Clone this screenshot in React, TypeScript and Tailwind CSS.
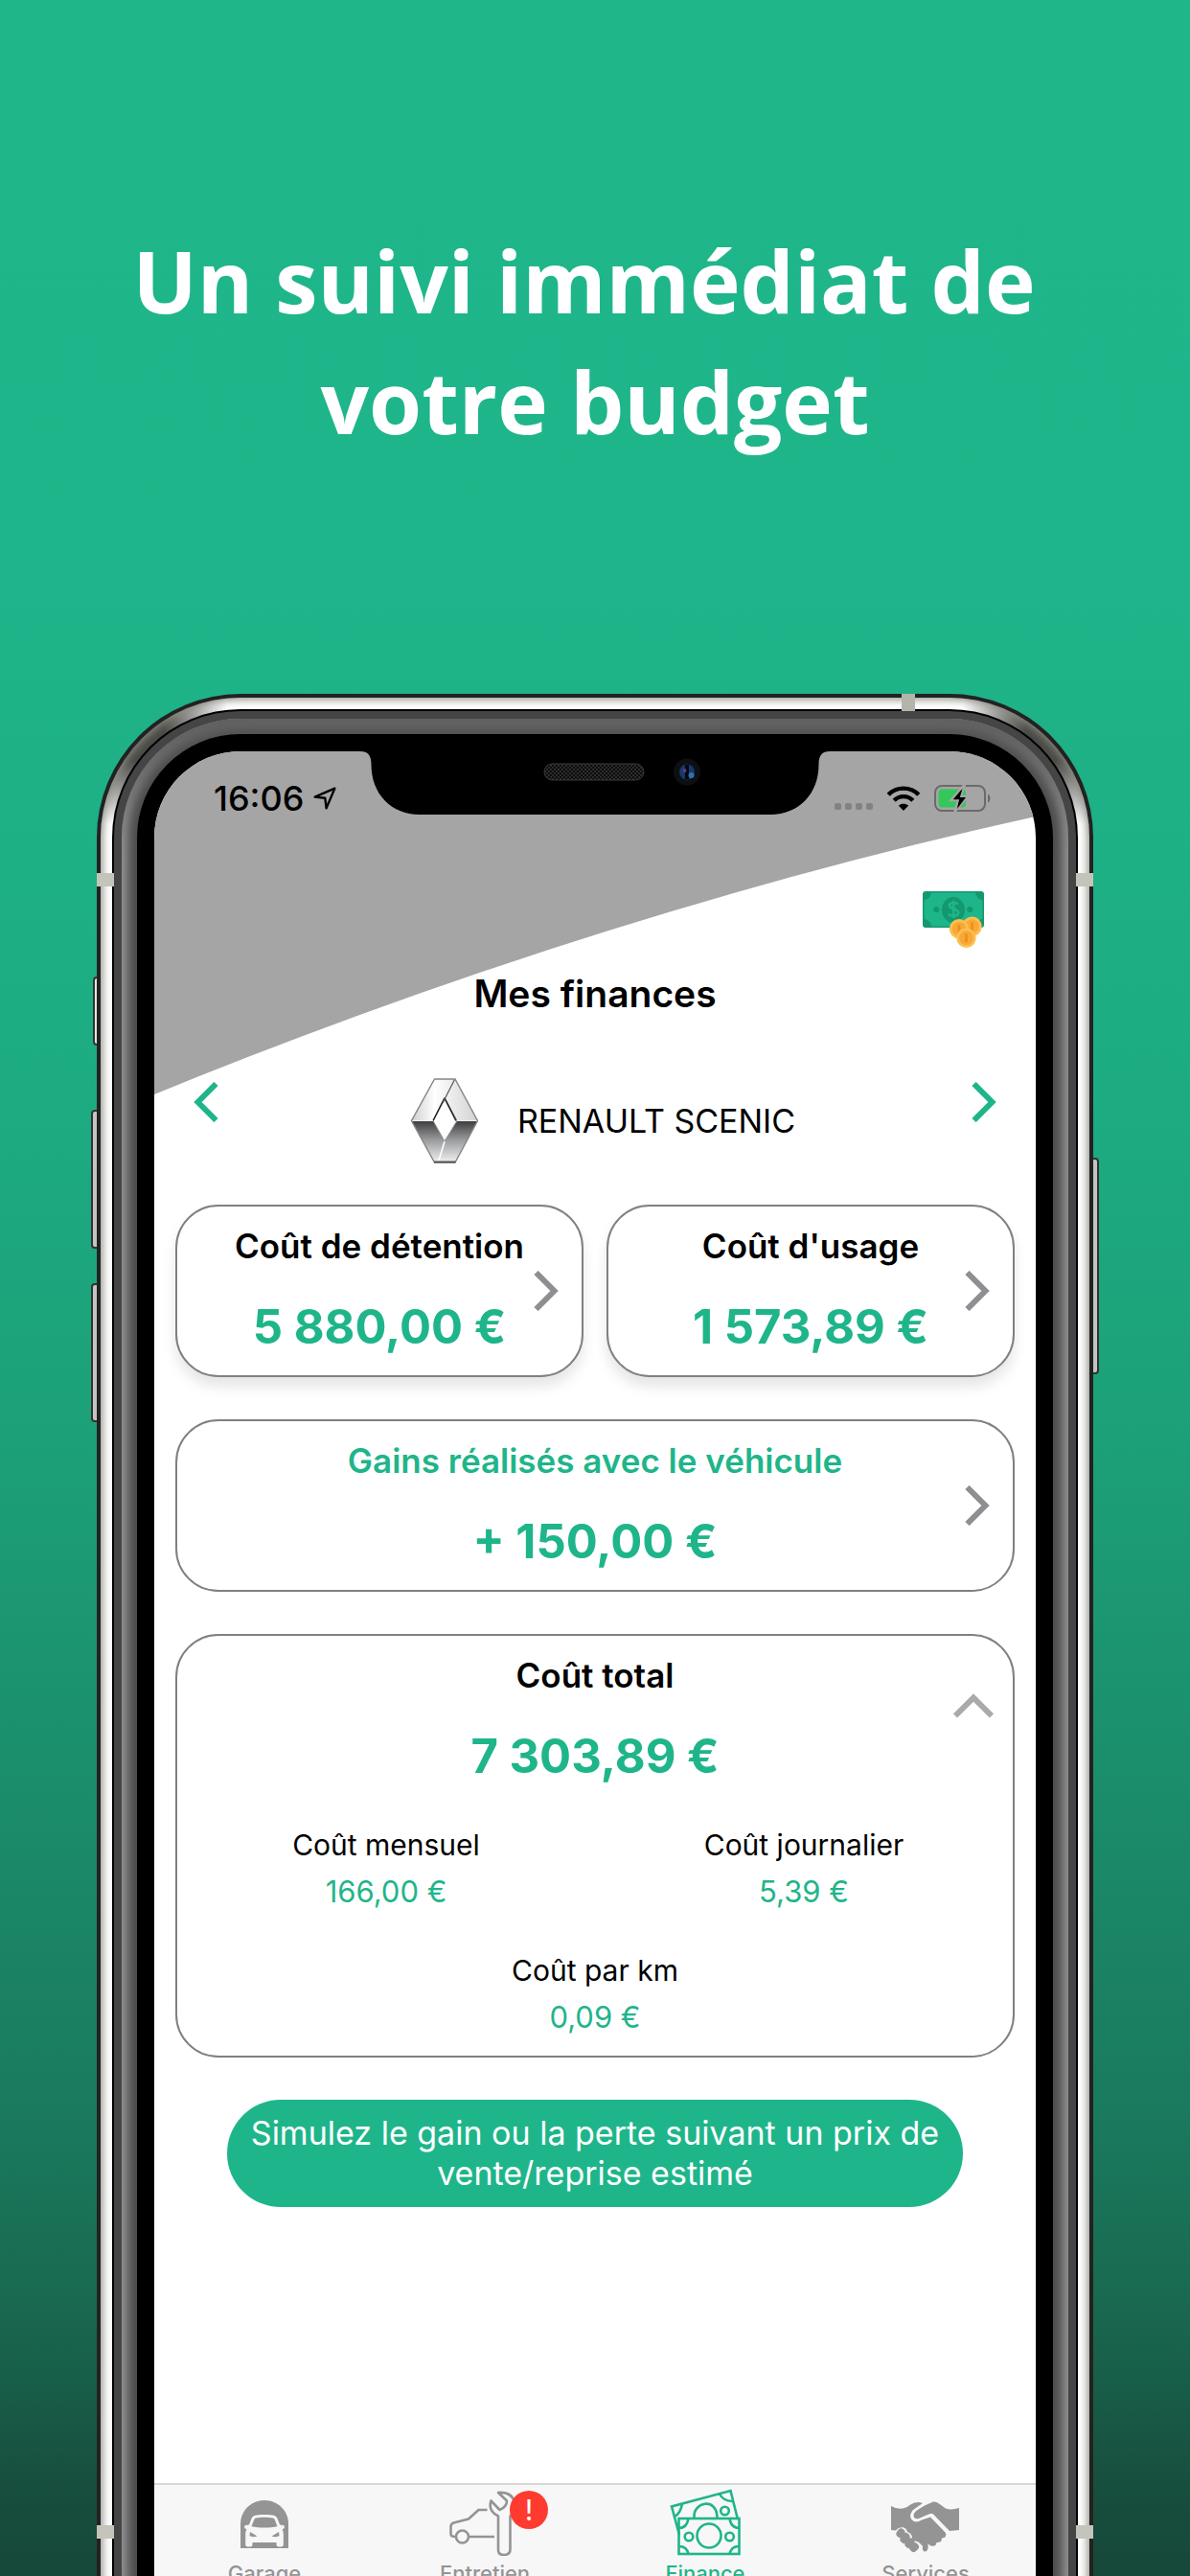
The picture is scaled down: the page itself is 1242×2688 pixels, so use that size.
import type { ReactNode } from "react";

interface CostCardProps {
  title: string;
  amount: string;
  accent?: boolean;
  shadow?: boolean;
}

const details = [
  { label: "Coût mensuel", value: "166,00 €", wide: false },
  { label: "Coût journalier", value: "5,39 €", wide: false },
  { label: "Coût par km", value: "0,09 €", wide: true },
];

function Chevron({ className }: { className: string }) {
  return (
    <svg className={`h-[42px] w-[26px] ${className}`} viewBox="0 0 26 42" fill="none" stroke="currentColor" strokeWidth={6}>
      <path d="M2.5 2 L21.5 21 L2.5 40" />
    </svg>
  );
}

function LocationArrow() {
  return (
    <svg className="h-6 w-6" viewBox="0 0 24 24" fill="none" stroke="currentColor" strokeWidth={2.4} strokeLinejoin="round">
      <path d="M22.4 1.6 L1.6 10.6 L12.3 11.8 L13.6 22.4 Z" />
    </svg>
  );
}

function WifiIcon() {
  return (
    <svg className="h-[26px] w-[36px]" viewBox="0 0 36 26" fill="none" stroke="#000" strokeWidth={4.4}>
      <path d="M2.2 9.2 C11 0.4 25 0.4 33.8 9.2" />
      <path d="M8.2 15.2 C13.6 9.8 22.4 9.8 27.8 15.2" />
      <path d="M18 26 L12.9 20.8 C15.7 18.2 20.3 18.2 23.1 20.8 Z" fill="#000" stroke="none" />
    </svg>
  );
}

function BatteryIcon() {
  return (
    <svg className="h-[30px] w-[60px]" viewBox="0 0 60 30" fill="none">
      <rect x="1" y="2" width="52" height="26" rx="7" stroke="#6b6b6b" strokeWidth="2" />
      <path d="M56 10.5 C59.3 11.5 59.3 18.5 56 19.5 Z" fill="#6b6b6b" />
      <rect x="4.5" y="5.5" width="28.5" height="19" rx="4" fill="#34c759" />
      <path d="M30.5 2 L17.5 17 H25 L21.5 29 L35 13 H27.5 L31.5 2 Z" fill="#000" stroke="#a5a5a5" strokeWidth="2.5" />
      <path d="M29.5 5 L20 16.2 H26.2 L24 26 L33 14 H26.8 Z" fill="#000" />
    </svg>
  );
}

function Coin({ cx, cy }: { cx: number; cy: number }) {
  return (
    <g>
      <circle cx={cx} cy={cy} r="10.2" fill="#fcc050" />
      <circle cx={cx} cy={cy} r="7.4" fill="#f8a836" />
      <rect x={cx - 1.4} y={cy - 4.5} width="2.8" height="9" rx="1" fill="#ef8f1c" />
    </g>
  );
}

function MoneyIcon() {
  return (
    <svg className="h-[60px] w-16" viewBox="0 0 64 60">
      <rect width="64" height="38" rx="3" fill="#14986f" />
      <path d="M9 1.6 H55 A8 8 0 0 0 62.4 9 V29 A8 8 0 0 0 55 36.4 H9 A8 8 0 0 0 1.6 29 V9 A8 8 0 0 0 9 1.6Z" fill="#1fb58a" />
      <ellipse cx="32" cy="19.5" rx="12" ry="13.5" fill="#14986f" />
      <circle cx="14.3" cy="19" r="3.1" fill="#14986f" />
      <circle cx="49.3" cy="19" r="3.1" fill="#14986f" />
      <path d="M37 13.5 C35 11.3 28 11.2 28 15 C28 19.3 37.3 17.5 37.3 22.3 C37.3 26.5 29.5 26.4 27 23.8 M32.2 9.7 V28" fill="none" stroke="#1fb58a" strokeWidth="2.6" />
      <Coin cx={51.5} cy={36.7} />
      <Coin cx={38} cy={39.3} />
      <Coin cx={45.5} cy={48.7} />
    </svg>
  );
}

function RenaultLogo() {
  return (
    <svg className="h-[104px] w-[104px]" viewBox="0 0 104 104">
      <defs>
        <linearGradient id="chromeTop" x1="0" y1="0" x2="1" y2="0">
          <stop offset="0" stopColor="#cfcfcf" />
          <stop offset="0.35" stopColor="#ffffff" />
          <stop offset="0.7" stopColor="#e6e6e6" />
          <stop offset="1" stopColor="#d2d2d2" />
        </linearGradient>
        <linearGradient id="chromeBottom" x1="0" y1="0" x2="0" y2="1">
          <stop offset="0" stopColor="#3c3c3e" />
          <stop offset="0.45" stopColor="#98999b" />
          <stop offset="1" stopColor="#f2f2f2" />
        </linearGradient>
      </defs>
      <path d="M41.5 8 H63 L86.5 51.5 H17.5 Z" fill="url(#chromeTop)" />
      <path d="M17.5 51.5 H86.5 L63 95 H41.5 Z" fill="url(#chromeBottom)" />
      <path d="M52 27 L65 51.5 L52 73 L40 51.5 Z" fill="#fff" stroke="#8d8d8d" strokeWidth="1" />
      <path d="M52 28 L64 51.5 M52 28 L40 51.5" fill="none" stroke="#222" strokeWidth="1.6" />
      <path d="M62.5 8.5 L50 33" stroke="#555" strokeWidth="1.2" />
      <path d="M52 73 L46 93" stroke="#fff" strokeWidth="1.6" />
      <path d="M17.5 51.5 H40 M65 51.5 H86.5" stroke="#eee" strokeWidth="1.2" />
      <path d="M41.5 8 H63 L86.5 51.5 L63 95 H41.5 L17.5 51.5 Z" fill="none" stroke="#858585" strokeWidth="1.4" />
      <path d="M41 94.5 H63.5" stroke="#555" strokeWidth="2" />
    </svg>
  );
}

function GarageIcon() {
  return (
    <svg className="h-[70px] w-[76px]" viewBox="0 0 76 70">
      <path d="M13 62 V36.500 C13 23 24 12 38 12 C52 12 63 23 63 36.500 V62 Z" fill="#949494" />
      <path d="M27.500 28 C33 26.800 43 26.800 48.500 28 Q50.500 28.500 51.300 30.500 L54 37.500 L58.500 38.200 Q59.800 42 56.500 42 Q57.800 44 57.800 47 V58 Q57.800 60.500 55 60.500 H53 Q50.500 60.500 50.500 58 V56 H25.500 V58 Q25.500 60.500 23 60.500 H21 Q18.200 60.500 18.200 58 V47 Q18.200 44 19.500 42 Q16.200 42 17.500 38.200 L22 37.500 L24.700 30.500 Q25.500 28.500 27.500 28 Z" fill="#f7f7f8" />
      <path d="M29 30.500 C34 29.500 42 29.500 47 30.500 Q48.300 30.900 48.900 32.500 L51.500 39.300 C44 41 32 41 24.500 39.300 L27.100 32.500 Q27.700 30.900 29 30.500 Z" fill="#949494" />
      <path d="M23 45 L30.500 49.500 Q25 51 22.500 49 Z M53 45 L45.500 49.500 Q51 51 53.500 49 Z" fill="#949494" />
    </svg>
  );
}

function ServiceIcon() {
  return (
    <svg className="h-[70px] w-[76px]" viewBox="0 0 76 70" fill="none" stroke="#949494" strokeWidth="2.600" strokeLinejoin="round">
      <path d="M40.500 22 H31.500 L21 31.500 L5.500 35.500 Q2.500 36.500 2.500 39.500 V47 Q2.500 50 7 50 M21 50 H48" />
      <circle cx="14.500" cy="50" r="6.500" />
      <path d="M52 28.500 V64 Q52 69 58 69 Q64.500 69 64.500 63 V28.500 Q69 25 69 15 Q67 3 52 4 L61 12.500 Q61 19 53.500 22 L44.500 12.500 Q41 23 52 28.500 Z" />
    </svg>
  );
}

function FinanceIcon() {
  return (
    <svg className="h-[70px] w-[76px]" viewBox="0 0 76 70" fill="none" stroke="currentColor" strokeWidth="2.600">
      <path d="M11 48 L3 18.500 L64.500 2 L72 32" />
      <path d="M14 16 Q12 26 6 29 M53 5.500 Q57 13 67.500 13" />
      <path d="M26.500 30 C25 14 50 8 50.500 30" />
      <circle cx="58.500" cy="23" r="4.300" />
      <rect x="10.500" y="31" width="63" height="37" />
      <circle cx="42" cy="49" r="12.500" />
      <circle cx="21" cy="50" r="4.300" />
      <circle cx="63.500" cy="50" r="4.300" />
      <path d="M20.500 31 Q19 41 10.500 41 M63.500 31 Q65 41 73.500 41 M20.500 68 Q19 60 10.500 60 M63.500 68 Q65 60 73.500 60" />
    </svg>
  );
}

function HandshakeIcon() {
  return (
    <svg className="h-[70px] w-[76px]" viewBox="0 0 76 70" fill="#949494">
      <path d="M2 18 Q13 24 21.500 17 Q28 12.500 35 15 L25 22 Q20.500 27 23 31.500 Q27 37 34 32.500 L43 29.500 L59 46 Q60.500 51 55 51.500 Q55 56.500 49.500 56 Q49 61 43.500 59.500 L40.500 57.500 Q41.500 64 38 65.500 Q34 65.500 35 60 Q31 54 24 54 Q25 47 19 45 Q17 38 9 41.500 L7 43.500 L2 43 Z" />
      <path d="M37 17.500 L46 13.500 Q49 13 52 15.500 L59 20.500 Q65 22.500 73 20 V43 L63 44 L45.500 26 L42.500 26 L31 31 Q26 32 25.500 28 Q25.500 25 29 22.500 Z" />
      <g stroke="#949494" strokeWidth="8" strokeLinecap="round">
        <path d="M11.500 47 L12.500 45.500 M15.500 53 L17.500 50 M20.500 58 L22.500 55.500 M25.500 62 L27 60.500" />
      </g>
    </svg>
  );
}

function CostCard({ title, amount, accent, shadow }: CostCardProps) {
  return (
    <button
      className={`relative flex flex-col items-center rounded-[45px] border-2 border-[#808080] bg-white pt-[19px] pb-[22px] ${
        shadow ? "shadow-[0_10px_14px_rgba(0,0,0,0.10)]" : ""
      }`}
    >
      <span className={`text-[35px] leading-[44px] font-semibold ${accent ? "text-[#1fb58a]" : "text-black"}`}>{title}</span>
      <span className="mt-[35px] text-[49px] leading-[56px] font-bold text-[#1fb58a]">{amount}</span>
      <Chevron className="absolute top-1/2 right-6 -translate-y-1/2 text-[#8e8e93]" />
    </button>
  );
}

function Tab({ label, icon, active, badge }: { label: string; icon: ReactNode; active?: boolean; badge?: string }) {
  return (
    <a href="#" className={`flex flex-col items-center ${active ? "text-[#1fb58a]" : "text-[#949494]"}`}>
      <span className="relative">
        {icon}
        {badge && (
          <span className="absolute top-[2px] -right-7 flex size-10 items-center justify-center rounded-full bg-[#ff3b30] text-[30px] leading-[40px] text-white">
            {badge}
          </span>
        )}
      </span>
      <span className="mt-1 text-[22px] leading-[28px] font-medium">{label}</span>
    </a>
  );
}

// Metal and glass rings around the screen, from the outside in
function PhoneFrame({ children }: { children: ReactNode }) {
  return (
    <div className="relative mx-auto w-[84%] max-w-[1040px]">
      <div className="absolute top-[295px] -left-1 h-[72px] w-2 rounded-l-sm border-2 border-[#333] bg-[#e4e4e0]" />
      <div className="absolute top-[434px] -left-1.5 h-[145px] w-2.5 rounded-l-sm border-2 border-[#333] bg-[#c4c4c2]" />
      <div className="absolute top-[615px] -left-1.5 h-[145px] w-2.5 rounded-l-sm border-2 border-[#333] bg-[#c4c4c2]" />
      <div className="absolute top-[484px] -right-1.5 h-[226px] w-2.5 rounded-r-sm border-2 border-[#333] bg-[#c4c4c2]" />
      <div className="relative rounded-[150px] bg-[#222222] p-1">
        <div className="rounded-[146px] bg-white bg-[radial-gradient(circle_at_36px_36px,#4a4a46_0,#4a4a46_30px,transparent_100px),radial-gradient(circle_at_calc(100%-36px)_36px,#4a4a46_0,#4a4a46_30px,transparent_100px)] p-3 shadow-[inset_0_0_8px_2px_#8c8c84]">
          <div className="rounded-[134px] bg-black p-0.5">
            <div className="rounded-[132px] bg-[#454545] p-2">
              <div className="rounded-[124px] bg-[#4c4c4c] p-4 shadow-[inset_0_24px_20px_-10px_#5c5c5c,inset_0_0_12px_5px_#a6a6a6]">
                <div className="rounded-[108px] bg-black p-[18px]">{children}</div>
              </div>
            </div>
          </div>
        </div>
      </div>
      {/* Antenna bands */}
      <div className="absolute top-0 right-[186px] h-[18px] w-3.5 bg-[#b5b4aa]" />
      <div className="absolute top-[187px] left-0 h-3.5 w-[18px] bg-[#c4c4ba]" />
      <div className="absolute top-[187px] right-0 h-3.5 w-[18px] bg-[#c4c4ba]" />
      <div className="absolute top-[1911px] left-0 h-3.5 w-[18px] bg-[#c4c4ba]" />
      <div className="absolute top-[1911px] right-0 h-3.5 w-[18px] bg-[#c4c4ba]" />
    </div>
  );
}

function Notch() {
  return (
    <svg className="absolute top-0 left-1/2 h-[66px] w-[490px] -translate-x-1/2" viewBox="0 0 490 66">
      <defs>
        <pattern id="mesh" width="4" height="4" patternUnits="userSpaceOnUse">
          <rect width="4" height="4" fill="#0c0c0c" />
          <rect width="2" height="2" fill="#2c2c2c" />
          <rect x="2" y="2" width="2" height="2" fill="#2c2c2c" />
        </pattern>
      </defs>
      <path d="M0 -1 V0 C8 0 11.500 4 11.500 14 C11.500 44 32 66 62 66 H428 C458 66 478.500 44 478.500 14 C478.500 4 482 0 490 0 V-1 Z" fill="#000" />
      <rect x="192" y="13" width="104" height="17" rx="8.500" fill="url(#mesh)" stroke="#3a3a3a" strokeWidth="1" />
      <circle cx="341" cy="21.500" r="14" fill="#0e0f12" />
      <circle cx="341" cy="21.500" r="8" fill="#16386c" />
      <path d="M341 14 V29" stroke="#05070c" strokeWidth="4" />
      <circle cx="338.500" cy="20" r="2" fill="#5a3c8c" />
      <circle cx="345.500" cy="25" r="3" fill="#2f73a8" />
    </svg>
  );
}

export default function App() {
  return (
    <main className="h-screen overflow-hidden bg-[linear-gradient(to_bottom,#1fb68a_0%,#1fb58a_20%,#1dac82_42%,#1ca078_56%,#1b8f6c_68%,#1a7a5d_82%,#196a51_89%,#174d3c_97%,#17483a_100%)] font-['Inter','Liberation_Sans',sans-serif] text-black">
      <h1 className="mx-auto pt-[230px] pb-[242px] text-center font-['Open_Sans','Noto_Sans',sans-serif] text-[89px] leading-[126px] font-bold text-white">
        Un suivi immédiat de&nbsp;
        <br />
        votre budget
      </h1>

      <PhoneFrame>
        <div className="relative isolate overflow-hidden rounded-[90px] bg-white">
          <svg className="absolute top-0 left-0 -z-10 h-[358px] w-full" viewBox="0 0 920 358" preserveAspectRatio="none">
            <path d="M0 0 H920 V68 Q460 170 0 358 Z" fill="#a5a5a5" />
          </svg>
          <Notch />

          {/* Status bar */}
          <div className="flex items-center justify-between pt-[29px] pr-[46px] pl-[62px]">
            <div className="flex items-center gap-2.5">
              <span className="text-[36px] leading-[40px] font-medium">16:06</span>
              <LocationArrow />
            </div>
            <div className="flex items-center gap-3.5">
              <div className="flex gap-1 pt-4">
                <span className="size-[7px] rounded-xs bg-[#828282]" />
                <span className="size-[7px] rounded-xs bg-[#828282]" />
                <span className="size-[7px] rounded-xs bg-[#828282]" />
                <span className="size-[7px] rounded-xs bg-[#828282]" />
              </div>
              <WifiIcon />
              <BatteryIcon />
            </div>
          </div>

          {/* Header */}
          <div className="flex justify-end pt-[77px] pr-[54px]">
            <MoneyIcon />
          </div>
          <h2 className="mt-[25px] text-center text-[39px] leading-[44px] font-semibold">Mes finances</h2>

          {/* Vehicle picker */}
          <div className="mt-[59px] flex items-start justify-between px-[41px]">
            <button aria-label="Véhicule précédent" className="pt-[11px] text-[#1fb58a]">
              <Chevron className="rotate-180" />
            </button>
            <div className="flex items-center gap-6">
              <RenaultLogo />
              <span className="text-[34px] leading-[44px]">RENAULT SCENIC</span>
            </div>
            <button aria-label="Véhicule suivant" className="pt-[11px] text-[#1fb58a]">
              <Chevron className="" />
            </button>
          </div>

          {/* Costs */}
          <div className="mt-[35px] flex flex-col gap-11 px-[22px]">
            <div className="grid grid-cols-2 gap-6">
              <CostCard title="Coût de détention" amount="5 880,00 €" shadow />
              <CostCard title="Coût d'usage" amount="1 573,89 €" shadow />
            </div>
            <CostCard title="Gains réalisés avec le véhicule" amount="+ 150,00 €" accent />

            <section className="relative rounded-[45px] border-2 border-[#808080] bg-white pt-[19px] pb-5 text-center">
              <h3 className="text-[35px] leading-[44px] font-semibold">Coût total</h3>
              <p className="mt-[35px] text-[49px] leading-[56px] font-bold text-[#1fb58a]">7 303,89 €</p>
              <dl className="mt-11 grid grid-cols-2 gap-y-[42px] text-[30px] leading-[40px]">
                {details.map((item) => (
                  <div key={item.label} className={item.wide ? "col-span-2" : ""}>
                    <dt>{item.label}</dt>
                    <dd className="mt-[9px] text-[31px] text-[#1fb58a]">{item.value}</dd>
                  </div>
                ))}
              </dl>
              <button aria-label="Replier" className="absolute top-[52px] right-7 text-[#aaaaaa]">
                <Chevron className="-rotate-90" />
              </button>
            </section>

            <button className="mx-[54px] rounded-full bg-[#1fb58a] px-5 py-3.5 text-[34px] leading-[42px] text-white">
              Simulez le gain ou la perte suivant un prix de vente/reprise estimé
            </button>
          </div>

          {/* Tab bar */}
          <nav className="mt-72 grid h-[184px] grid-cols-4 border-t-2 border-[#d8d8d8] bg-[#f7f7f8] pt-1">
            <Tab label="Garage" icon={<GarageIcon />} />
            <Tab label="Entretien" icon={<ServiceIcon />} badge="!" />
            <Tab label="Finance" icon={<FinanceIcon />} active />
            <Tab label="Services" icon={<HandshakeIcon />} />
          </nav>
        </div>
      </PhoneFrame>
    </main>
  );
}
